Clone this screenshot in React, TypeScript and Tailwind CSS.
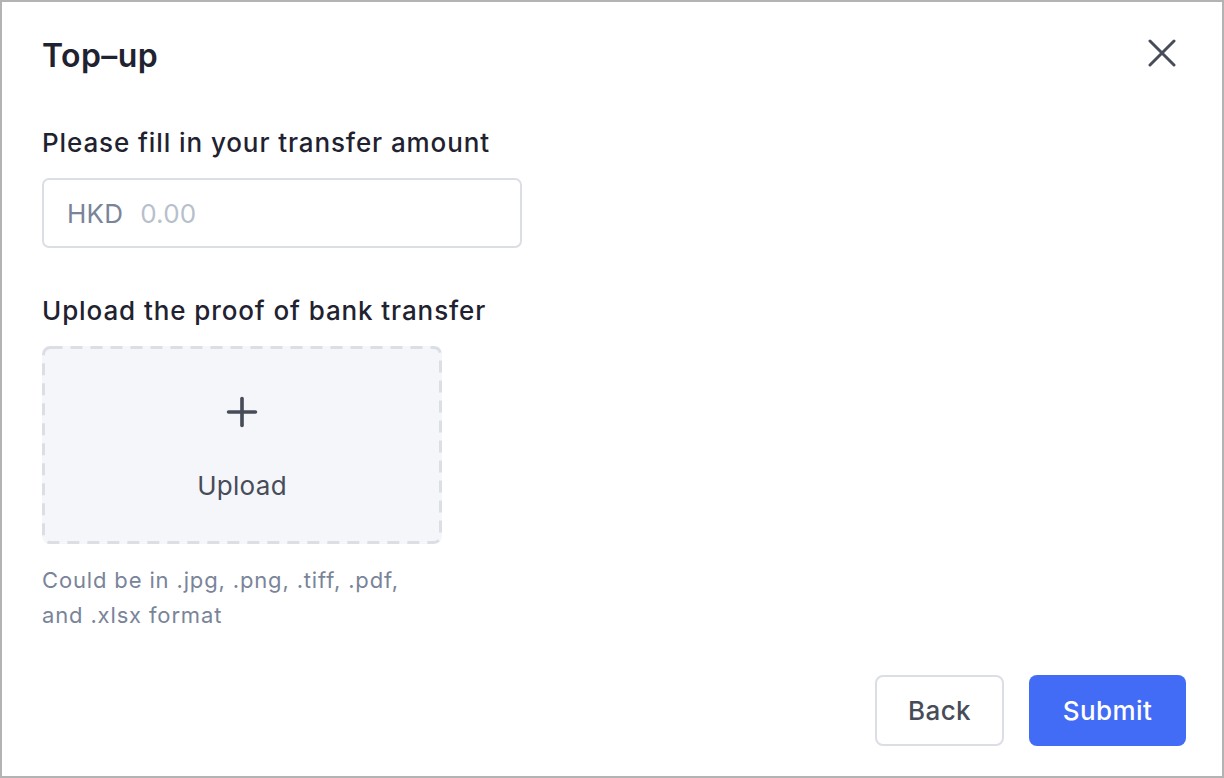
import { Plus } from "lucide-react"

export default function App() {
  return (
    <div
      className="w-[1224px] h-[778px] border-2 border-[#b3b3b3] bg-white flex flex-col px-[40px] pt-[35px] pb-[30px]"
      style={{ fontFamily: "Inter, 'Noto Sans', sans-serif" }}
    >
      <div className="flex items-start justify-between">
        <h2 className="text-[32px] leading-[38px] font-semibold text-[#1f2230] tracking-[0.4px]">Top–up</h2>
        <button className="mt-[2px] mr-[6px] text-[#474c59]">
          <svg width="28" height="28" viewBox="0 0 28 28" fill="none" stroke="currentColor" strokeWidth="3" strokeLinecap="round">
            <path d="M2 2L26 26M26 2L2 26" />
          </svg>
        </button>
      </div>

      <label className="mt-[52px] text-[26px] leading-[32px] font-medium text-[#1f2230] tracking-[0.9px]">
        Please fill in your transfer amount
      </label>
      <div className="mt-[19px] w-[480px] h-[70px] rounded-[7px] border-2 border-[#dcdee6] flex items-center px-[23px] gap-[17px] text-[26px] tracking-[0.2px]">
        <span className="text-[#7a8499]">HKD</span>
        <span className="text-[#b8bfcc]">0.00</span>
      </div>

      <label className="mt-[47px] text-[26px] leading-[32px] font-medium text-[#1f2230] tracking-[0.9px]">
        Upload the proof of bank transfer
      </label>
      <div className="relative mt-[19px] w-[400px] h-[198px] rounded-[8px] bg-[#f5f6fa] flex flex-col items-center pt-[43px] text-[#474c59]">
        <svg className="absolute inset-0" width="400" height="198" fill="none">
          <rect x="1.5" y="1.5" width="397" height="195" rx="7" stroke="#dcdee6" strokeWidth="3" strokeDasharray="12 8" />
        </svg>
        <Plus size={46} strokeWidth={1.9} />
        <span className="mt-[35px] text-[26px] leading-[32px] tracking-[0.3px]">Upload</span>
      </div>
      <p className="mt-[19px] text-[22px] leading-[35px] text-[#7a8499] tracking-[0.85px]">
        Could be in .jpg, .png, .tiff, .pdf,
        <br />
        and .xlsx format
      </p>

      <div className="mt-auto flex justify-end gap-[25px]">
        <button className="w-[129px] h-[71px] rounded-[8px] border-2 border-[#dcdee6] text-[26px] font-medium tracking-[0.4px] text-[#474c59]">
          Back
        </button>
        <button className="w-[157px] h-[71px] rounded-[8px] bg-[#436cf6] text-[26px] font-medium tracking-[0.4px] text-white mr-[-4px]">
          Submit
        </button>
      </div>
    </div>
  )
}
